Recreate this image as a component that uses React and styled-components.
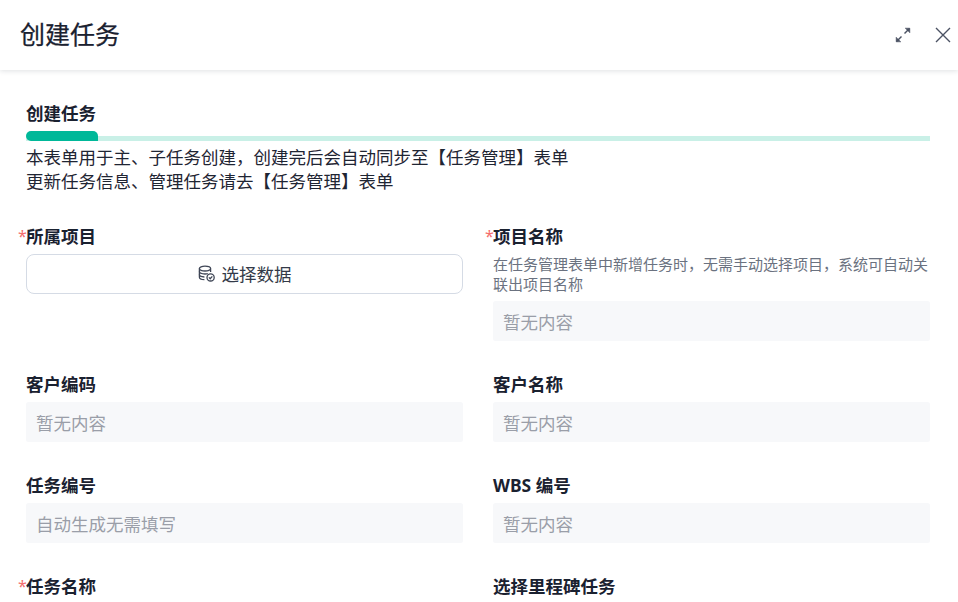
import React from 'react'
import styled, { createGlobalStyle } from 'styled-components'

const Global = createGlobalStyle`
  html, body {
    margin: 0;
    padding: 0;
    background: #fff;
  }
  body {
    font-family: "Noto Sans", "Noto Sans CJK SC", sans-serif;
    color: #1f2937;
  }
`

const Page = styled.div`
  width: 958px;
  height: 602px;
  overflow: hidden;
  display: flex;
  flex-direction: column;
`

const Header = styled.header`
  flex: none;
  height: 70px;
  padding: 0 7px 0 20px;
  display: flex;
  align-items: center;
  justify-content: space-between;
  box-shadow: 0 1px 5px rgba(31, 41, 55, 0.14);
`

const Title = styled.h1`
  margin: 0 0 2px;
  font-size: 25px;
  font-weight: 400;
  line-height: 30px;
  color: #1a2130;
  -webkit-text-stroke: 0.25px #1a2130;
`

const HeaderActions = styled.div`
  display: flex;
  align-items: center;
  gap: 24px;
  color: #4b5263;
`

const IconButton = styled.button`
  padding: 0;
  border: 0;
  background: none;
  color: inherit;
  display: flex;
`

const Body = styled.main`
  padding: 30px 28px 0 26px;
`

const SectionTitle = styled.h2`
  margin: 0;
  font-size: 17.5px;
  font-weight: 700;
  line-height: 26px;
  color: #1a2130;
`

const Track = styled.div`
  height: 5px;
  margin-top: 10px;
  background: #c9f0e7;
  display: flex;
  align-items: flex-end;
`

const TrackFill = styled.div`
  width: 72px;
  height: 10px;
  background: #00b899;
  border-radius: 8px 8px 0 8px;
`

const Intro = styled.p`
  margin: 4px 0 0;
  font-size: 17.5px;
  line-height: 24px;
  color: #1f2533;
`

const FormGrid = styled.div`
  display: grid;
  grid-template-columns: 437px 437px;
  column-gap: 30px;
  margin-top: 31px;
`

const Field = styled.div`
  min-height: ${(p) => p.$minHeight || 101}px;
`

const Label = styled.label`
  position: relative;
  display: block;
  font-size: 17.5px;
  font-weight: 700;
  line-height: 25px;
  color: #1a2130;
`

const Required = styled.span`
  position: absolute;
  left: -8px;
  top: 0;
  font-size: 16px;
  font-weight: 400;
  color: #f56c6c;
`

const Hint = styled.div`
  margin: 5px 0 7px;
  font-size: 15px;
  line-height: 20px;
  color: #6b7280;
`

const ReadOnly = styled.div`
  height: 40px;
  margin-top: ${(p) => (p.$flush ? 0 : 5)}px;
  padding: 0 10px;
  box-sizing: border-box;
  display: flex;
  align-items: center;
  font-size: 17.5px;
  color: #9a9ea8;
  background: #f7f8fa;
  border-radius: 2.5px;
`

const SelectButton = styled.button`
  width: 100%;
  height: 40px;
  margin-top: 5px;
  padding: 0 0 2px;
  display: flex;
  align-items: center;
  justify-content: center;
  gap: 7px;
  font-family: inherit;
  font-size: 17.5px;
  color: #333a48;
  background: #fff;
  border: 1px solid #d5dbe5;
  border-radius: 8px;
`

const ExpandIcon = () => (
  <svg width="16" height="16" viewBox="0 0 16 16" fill="none" stroke="currentColor" strokeWidth="1.5">
    <path d="M9.5 6.5 14.5 1.5" />
    <path d="M10 1.2h4.8V6" fill="currentColor" strokeWidth="0.6" />
    <path d="M1.5 14.5 6.5 9.5" />
    <path d="M1.2 10v4.8H6" fill="currentColor" strokeWidth="0.6" />
  </svg>
)

const CloseIcon = () => (
  <svg width="16" height="16" viewBox="0 0 16 16" fill="none" stroke="currentColor" strokeWidth="1.4">
    <path d="M1 1 15 15M15 1 1 15" />
  </svg>
)

const DataIcon = () => (
  <svg width="17" height="17" viewBox="0 0 17 17" fill="none" stroke="#3f4656" strokeWidth="1.3">
    <ellipse cx="7" cy="3.6" rx="5.6" ry="2.4" />
    <path d="M1.4 3.6v8.6c0 1.3 2.3 2.4 5 2.4" />
    <path d="M12.6 3.6v3.4" />
    <path d="M1.4 6.6c0 1.3 2.5 2.4 5.6 2.4 1 0 2-.1 2.8-.4" />
    <path d="M1.4 9.6c0 1.3 2.2 2.3 5 2.4" />
    <circle cx="12.6" cy="12.4" r="3.6" />
    <path d="M10.9 12.4 12.2 13.7 14.3 11.4" />
  </svg>
)

export default function App() {
  return (
    <Page>
      <Global />
      <Header>
        <Title>创建任务</Title>
        <HeaderActions>
          <IconButton><ExpandIcon /></IconButton>
          <IconButton><CloseIcon /></IconButton>
        </HeaderActions>
      </Header>
      <Body>
        <SectionTitle>创建任务</SectionTitle>
        <Track><TrackFill /></Track>
        <Intro>
          本表单用于主、子任务创建，创建完后会自动同步至【任务管理】表单
          <br />
          更新任务信息、管理任务请去【任务管理】表单
        </Intro>
        <FormGrid>
          <Field $minHeight={148}>
            <Label><Required>*</Required>所属项目</Label>
            <SelectButton><DataIcon />选择数据</SelectButton>
          </Field>
          <Field $minHeight={148}>
            <Label><Required>*</Required>项目名称</Label>
            <Hint>在任务管理表单中新增任务时，无需手动选择项目，系统可自动关联出项目名称</Hint>
            <ReadOnly $flush>暂无内容</ReadOnly>
          </Field>
          <Field>
            <Label>客户编码</Label>
            <ReadOnly>暂无内容</ReadOnly>
          </Field>
          <Field>
            <Label>客户名称</Label>
            <ReadOnly>暂无内容</ReadOnly>
          </Field>
          <Field>
            <Label>任务编号</Label>
            <ReadOnly>自动生成无需填写</ReadOnly>
          </Field>
          <Field>
            <Label>WBS 编号</Label>
            <ReadOnly>暂无内容</ReadOnly>
          </Field>
          <Field>
            <Label><Required>*</Required>任务名称</Label>
          </Field>
          <Field>
            <Label>选择里程碑任务</Label>
          </Field>
        </FormGrid>
      </Body>
    </Page>
  )
}
